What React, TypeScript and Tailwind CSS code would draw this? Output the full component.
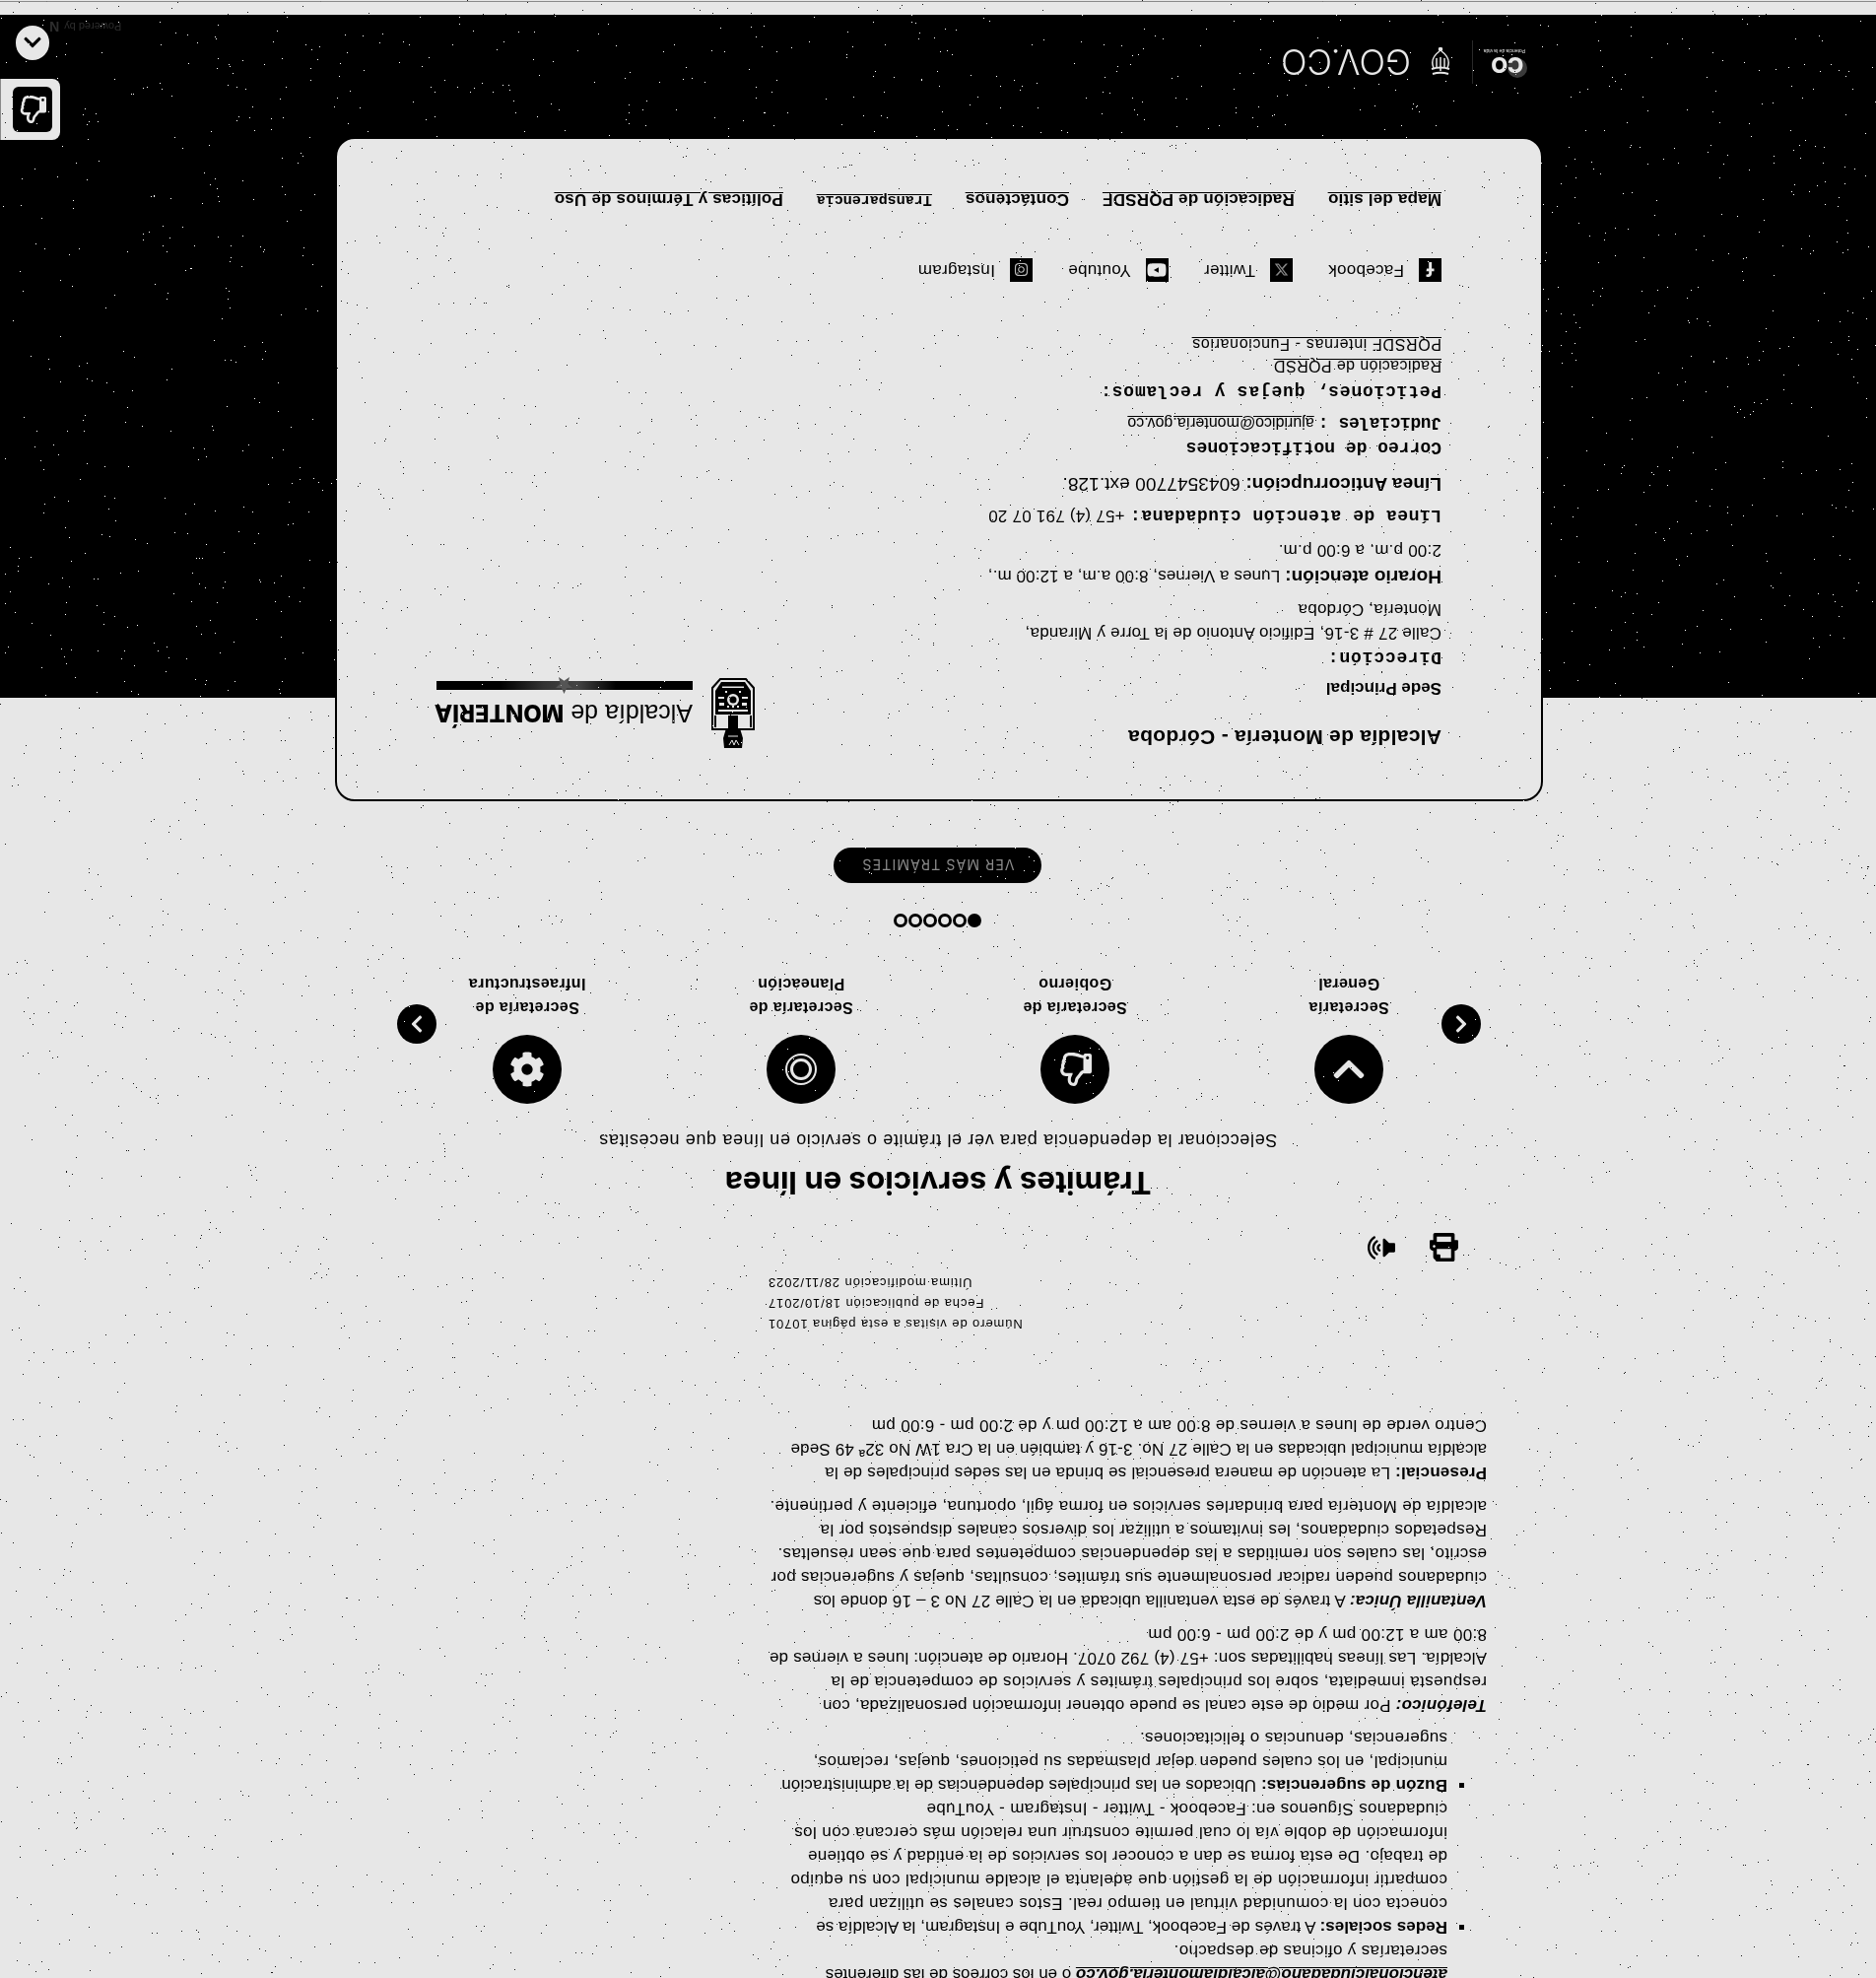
import { FaChevronDown, FaChevronLeft, FaChevronRight, FaChevronUp, FaCog, FaFacebookF, FaInstagram, FaPrint, FaRegThumbsUp, FaVolumeUp, FaYoutube } from "react-icons/fa";
import { FaXTwitter } from "react-icons/fa6";

const noise = (() => {
  let s = 20240611;
  const r = () => {
    s = (s + 0x6d2b79f5) | 0;
    let t = Math.imul(s ^ (s >>> 15), 1 | s);
    t = (t + Math.imul(t ^ (t >>> 7), 61 | t)) ^ t;
    return ((t ^ (t >>> 14)) >>> 0) / 4294967296;
  };
  let d = "";
  for (let i = 0; i < 6200; i++) {
    d += `M${Math.floor(r() * 1904)} ${Math.floor(r() * 2007)}h1v1h-1z`;
  }
  return d;
})();

const sans = "font-['Liberation_Sans',Arial,sans-serif]";
const mono = "font-['Liberation_Mono','Courier_New',monospace] text-[18px] font-bold";

function Item({ icon, lines }: { icon: React.ReactNode; lines: string[] }) {
  return (
    <div className="flex flex-col items-center">
      <div className="flex h-[70px] w-[70px] items-center justify-center rounded-full bg-black text-[#e7e7e7]">{icon}</div>
      <p className="mt-[16px] text-center text-[16px] font-bold leading-[24px] tracking-[0.4px]">
        {lines[0]}
        <br />
        {lines[1]}
      </p>
    </div>
  );
}

function Social({ icon, label }: { icon: React.ReactNode; label: string }) {
  return (
    <span className="flex items-center gap-[15px] text-[17px] leading-[24px] tracking-[0.3px]">
      <span className="flex h-[24px] w-[23px] items-center justify-center bg-black text-[#e7e7e7]">{icon}</span>
      {label}
    </span>
  );
}

export default function App() {
  return (
    <div className={`relative h-[2007px] w-[1904px] rotate-180 overflow-hidden bg-[#e7e7e7] text-black ${sans}`}>
      {/* artículo */}
      <div className="-mt-[8px] ml-[395px] whitespace-nowrap text-[17px] leading-[24px] tracking-[0.32px]">
        <ul className="list-[square] pl-[40px]">
          <li className="list-none">
            <span className="tracking-[-0.03px]">
              <a className="font-bold italic underline">atencionalciudadano@alcaldiamonteria.gov.co</a> o en los correos de las diferentes
            </span>
            <br />
            secretarías y oficinas de despacho.
          </li>
          <li>
            <span className="tracking-[0.07px]">
              <b>Redes sociales:</b> A través de Facebook, Twitter, YouTube e Instagram, la Alcaldía se
            </span>
            <br />
            <span className="tracking-[0.43px]">conecta con la comunidad virtual en tiempo real. Estos canales se utilizan para</span>
            <br />
            <span className="tracking-[0.43px]">compartir información de la gestión que adelanta el alcalde municipal con su equipo</span>
            <br />
            de trabajo. De esta forma se dan a conocer los servicios de la entidad y se obtiene
            <br />
            <span className="tracking-[0.42px]">información de doble vía lo cual permite construir una relación más cercana con los</span>
            <br />
            ciudadanos Síguenos en: Facebook - Twitter - Instagram - YouTube
          </li>
          <li>
            <span className="tracking-[0.14px]">
              <b>Buzón de sugerencias:</b> Ubicados en las principales dependencias de la administración
            </span>
            <br />
            municipal, en los cuales pueden dejar plasmadas su peticiones, quejas, reclamos,
            <br />
            sugerencias, denuncias o felicitaciones.
          </li>
        </ul>
        <p className="mt-[9px]">
          <span className="tracking-[0.23px]">
            <b className="italic">Telefónico:</b> Por medio de este canal se puede obtener información personalizada, con
          </span>
          <br />
          <span className="tracking-[0.39px]">respuesta inmediata, sobre los principales trámites y servicios de competencia de la</span>
          <br />
          <span className="tracking-[0.19px]">Alcaldía. Las líneas habilitadas son: +57 (4) 792 0707. Horario de atención: lunes a viernes de</span>
          <br />
          8:00 am a 12:00 pm y de 2:00 pm - 6:00 pm
        </p>
        <p className="mt-[10px]">
          <span className="tracking-[0.17px]">
            <b className="italic">Ventanilla Única:</b> A través de esta ventanilla ubicada en la Calle 27 No 3 – 16 donde los
          </span>
          <br />
          ciudadanos pueden radicar personalmente sus trámites, consultas, quejas y sugerencias por
          <br />
          <span className="tracking-[0.38px]">escrito, las cuales son remitidas a las dependencias competentes para que sean resueltas.</span>
          <br />
          Respetados ciudadanos, les invitamos a utilizar los diversos canales dispuestos por la
          <br />
          <span className="tracking-[0.36px]">alcaldía de Montería para brindarles servicios en forma ágil, oportuna, eficiente y pertinente.</span>
        </p>
        <p className="mt-[10px]">
          <span className="tracking-[0.21px]">
            <b>Presencial:</b> La atención de manera presencial se brinda en las sedes principales de la
          </span>
          <br />
          <span className="tracking-[0.15px]">alcaldía municipal ubicadas en la Calle 27 No. 3-16 y también en la Cra 1W No 32ª 49 Sede</span>
          <br />
          Centro verde de lunes a viernes de 8:00 am a 12:00 pm y de 2:00 pm - 6:00 pm
        </p>
      </div>

      {/* datos de la página */}
      <div className="ml-[860px] mt-[80px] w-[265px] text-right text-[13px] leading-[21px] tracking-[0.9px]">
        <p>Número de visitas a esta página 10701</p>
        <p>Fecha de publicación 18/10/2017</p>
        <p>Última modificación 28/11/2023</p>
      </div>
      <div className="ml-[424px] mt-[10px] flex h-[30px] items-center gap-[35px]">
        <FaPrint className="h-[29px] w-[29px]" />
        <FaVolumeUp className="h-[28px] w-[28px]" />
      </div>

      {/* trámites */}
      <h2 className="mt-[31px] text-center font-['Inter',sans-serif] text-[31.2px] font-bold leading-[40px]">Trámites y servicios en línea</h2>
      <p className="mt-[11px] text-center text-[18px] leading-[24px] tracking-[0.64px]">
        Seleccionar la dependencia para ver el trámite o servicio en línea que necesitas
      </p>
      <div className="relative mx-auto mt-[25px] grid w-[1112px] grid-cols-4">
        <Item icon={<FaChevronDown className="h-[36px] w-[36px]" />} lines={["Secretaría", "General"]} />
        <Item icon={<FaRegThumbsUp className="h-[34px] w-[34px]" />} lines={["Secretaría de", "Gobierno"]} />
        <Item
          icon={
            <svg viewBox="0 0 36 36" className="h-[36px] w-[36px]" fill="none" stroke="currentColor">
              <circle cx="18" cy="18" r="15" strokeWidth="2" />
              <circle cx="18" cy="18" r="9.500" strokeWidth="3" />
            </svg>
          }
          lines={["Secretaría de", "Planeación"]}
        />
        <Item icon={<FaCog className="h-[36px] w-[36px]" />} lines={["Secretaría de", "Infraestructura"]} />
        <button className="absolute left-[5px] top-[61px] flex h-[40px] w-[40px] items-center justify-center rounded-full bg-black text-[#e7e7e7]">
          <FaChevronLeft className="h-[20px] w-[20px]" />
        </button>
        <button className="absolute right-[7px] top-[61px] flex h-[40px] w-[40px] items-center justify-center rounded-full bg-black text-[#e7e7e7]">
          <FaChevronRight className="h-[20px] w-[20px]" />
        </button>
      </div>
      <div className="mt-[45px] flex justify-center gap-[1px]">
        <span className="h-[14px] w-[14px] rounded-full border-[3px] border-black bg-black" />
        <span className="h-[14px] w-[14px] rounded-full border-[3px] border-black" />
        <span className="h-[14px] w-[14px] rounded-full border-[3px] border-black" />
        <span className="h-[14px] w-[14px] rounded-full border-[3px] border-black" />
        <span className="h-[14px] w-[14px] rounded-full border-[3px] border-black" />
        <span className="h-[14px] w-[14px] rounded-full border-[3px] border-black" />
      </div>
      <a className="mx-auto mt-[31px] flex h-[36px] w-[211px] items-center justify-center rounded-full bg-black font-['Inter',sans-serif] text-[14px] tracking-[1.15px] text-[#8a8a8a]">
        VER MÁS TRÁMITES
      </a>

      {/* pie */}
      <footer className="mt-[47px] h-[798px] bg-[linear-gradient(to_bottom,transparent_105px,#000_105px)]">
        <div className="ml-[338px] h-[674px] w-[1226px] whitespace-nowrap rounded-[20px] border-[2px] border-black bg-[#e7e7e7] px-[101px] pt-[52px]">
          <div className="flex justify-between">
            <div className="text-[17px] leading-[24px] tracking-[0.23px]">
              <h3 className="-mt-[3px] text-[21px] font-bold leading-[28px] tracking-[0.3px]">Alcaldía de Montería - Córdoba</h3>
              <p className="mt-[24px] font-bold tracking-normal">Sede Principal</p>
              <p className={`mt-[7px] tracking-[0.8px] ${mono}`}>Dirección:</p>
              <p className="mt-[1px]">Calle 27 # 3-16, Edificio Antonio de la Torre y Miranda,</p>
              <p>Montería, Córdoba</p>
              <p className="mt-[9px] tracking-[0.1px]">
                <b className="text-[19px]">Horario atención:</b> Lunes a Viernes, 8:00 a.m, a 12:00 m.,
              </p>
              <p className="mt-[2px]">2:00 p.m. a 6:00 p.m.</p>
              <p className="mt-[11px]">
                <span className={`tracking-[0.5px] ${mono}`}>Línea de atención ciudadana:</span> +57 (4) 791 07 20
              </p>
              <p className="mt-[8px] text-[19px] tracking-[0.1px]">
                <b>Línea Anticorrupción:</b> 6043547700 ext.128.
              </p>
              <p className={`mt-[13px] tracking-normal ${mono}`}>Correo de notificaciones</p>
              <p className="mt-[1px] text-[16px] tracking-normal">
                <span className={`tracking-[-0.4px] ${mono}`}>Judiciales :</span> <a className="underline">ajuridico@montería.gov.co</a>
              </p>
              <p className={`mt-[8px] tracking-[0.75px] ${mono}`}>Peticiones, quejas y reclamos:</p>
              <p className="mt-[3px] text-[16px] leading-[22px] tracking-[0.4px] underline">Radicación de PQRSD</p>
              <p className="text-[16px] leading-[22px] tracking-[0.65px] underline">PQRSDF internas - Funcionarios</p>
            </div>
            <div className="flex h-[72px] items-start gap-[19px]">
              <svg viewBox="0 0 44 72" className="h-[72px] w-[44px] shrink-0">
                <path d="M13 0h18l1 10-3 10h-14l-3-10z" fill="#000" />
                <path d="M16 3l3 5 2-5 2 5 3-5M17 12h10" fill="none" stroke="#e7e7e7" strokeWidth="1" />
                <path d="M1 19h42v42l-8 9h-26l-8-9z" fill="#e7e7e7" stroke="#000" strokeWidth="2" />
                <path d="M17 19h10v14h-10z" fill="#000" />
                <path d="M3 21h2v12h-2z M39 21h2v12h-2z" fill="#000" />
                <path d="M4 34h36v24l-6 9h-24l-6-9z" fill="#000" />
                <path d="M7 37h30v2h-30z M8 43h5v3h-5z M31 43h5v3h-5z M7 50h6v2h-6z M31 50h6v2h-6z M11 61h22v1.500h-22z" fill="#e7e7e7" />
                <circle cx="22" cy="49" r="6" fill="#e7e7e7" />
                <circle cx="22" cy="49" r="3.500" fill="#000" />
                <path d="M16 41h2v2h-2z M26 41h2v2h-2z M21 41h2v2h-2z M14 56h2v2h-2z M28 56h2v2h-2z" fill="#e7e7e7" />
              </svg>
              <div className="w-[260px]">
                <p className="mt-[21px] text-[25px] leading-[28px]">
                  Alcaldía de <b className="font-['Inter',sans-serif] text-[24px] font-extrabold">MONTERÍA</b>
                </p>
                <div className="relative mt-[9px] h-[9px] bg-[linear-gradient(to_right,#000_0%,#000_30%,#444_45%,#333_58%,#000_75%,#000_100%)]">
                  <svg viewBox="0 0 20 20" className="absolute left-[122px] top-[-4px] h-[17px] w-[17px]">
                    <path d="M10 0l3 7 7 0-5.500 5 2 8-6.500-4.500-6.500 4.500 2-8-5.500-5 7 0z" fill="#555" />
                  </svg>
                </div>
              </div>
            </div>
          </div>
          <div className="mt-[52px] flex gap-[36px]">
            <Social icon={<FaFacebookF className="h-[15px] w-[15px]" />} label="Facebook" />
            <Social icon={<FaXTwitter className="h-[15px] w-[15px] text-[#888]" />} label="Twitter" />
            <Social icon={<FaYoutube className="h-[20px] w-[20px]" />} label="Youtube" />
            <Social icon={<FaInstagram className="h-[15px] w-[15px] text-[#bbb]" />} label="Instagram" />
          </div>
          <nav className="mt-[48px] flex gap-[34px] text-[17px] font-bold leading-[24px] tracking-[0.2px] underline">
            <a>Mapa del sitio</a>
            <a>Radicación de PQRSDF</a>
            <a>Contáctenos</a>
            <a className="font-['Liberation_Mono',monospace] text-[15px] tracking-normal">Transparencia</a>
            <a>Políticas y Términos de Uso</a>
          </nav>
        </div>
        <div className="ml-[356px] mt-[54px] flex h-[44px] items-center">
          <div className="relative h-[32px] w-[36px] whitespace-nowrap text-[#e7e7e7]">
            <span className="absolute -left-[2px] top-0 h-[20px] w-[20px] rounded-full bg-[#3a3a3a]" />
            <span className="absolute inset-x-0 top-[5px] text-center font-['Inter',sans-serif] text-[22px] font-extrabold leading-[16px] tracking-[-0.5px]">CO</span>
            <span className="absolute inset-x-0 bottom-[2px] text-center text-[5px] leading-[6px]">Potencia de la vida</span>
          </div>
          <span className="ml-[17px] h-[44px] w-px bg-[#2a2a2a]" />
          <svg viewBox="0 0 24 30" className="ml-[20px] h-[30px] w-[24px] text-[#e7e7e7]" fill="none" stroke="currentColor" strokeWidth="1.500">
            <path d="M4 3c6 2 10 2 16 0M3 8c6 2 12 2 18 0" strokeWidth="2" />
            <path d="M12 6v14M5 9c-3 7-1 12 6 17M19 9c3 7 1 12-6 17M8 10v9M16 10v9" />
            <circle cx="12" cy="28" r="1.500" fill="currentColor" />
          </svg>
          <span className="ml-[18px] font-['Inter',sans-serif] text-[35px] font-light leading-[44px] text-[#e7e7e7]">GOV.CO</span>
        </div>
      </footer>
      <div className="h-[14px] border-b border-[#8a8a8a] bg-[#e7e7e7]" />

      {/* flotantes */}
      <div className="absolute right-0 top-[1865px] flex h-[62px] w-[61px] items-center justify-end rounded-l-[8px] border-r border-[#8a8a8a] bg-[#e7e7e7] pr-[12px]">
        <span className="flex h-[46px] w-[40px] items-center justify-center rounded-[6px] bg-black text-[#e7e7e7]">
          <FaRegThumbsUp className="h-[28px] w-[28px]" />
        </span>
      </div>
      <button className="absolute right-[16px] top-[1946px] flex h-[35px] w-[34px] items-center justify-center rounded-full bg-[#e7e7e7] text-black">
        <FaChevronUp className="h-[20px] w-[20px]" />
      </button>
      <span className="absolute right-[50px] top-[1974px] flex items-center gap-[5px] text-[11px] leading-[13px] text-[#2e2e2e]">
        Powered by <b className="text-[14px]">N</b>
      </span>

      {/* grano de la captura */}
      <svg className="pointer-events-none absolute inset-0 mix-blend-difference" width="1904" height="2007" shapeRendering="crispEdges">
        <path d={noise} fill="#fff" />
      </svg>
    </div>
  );
}
